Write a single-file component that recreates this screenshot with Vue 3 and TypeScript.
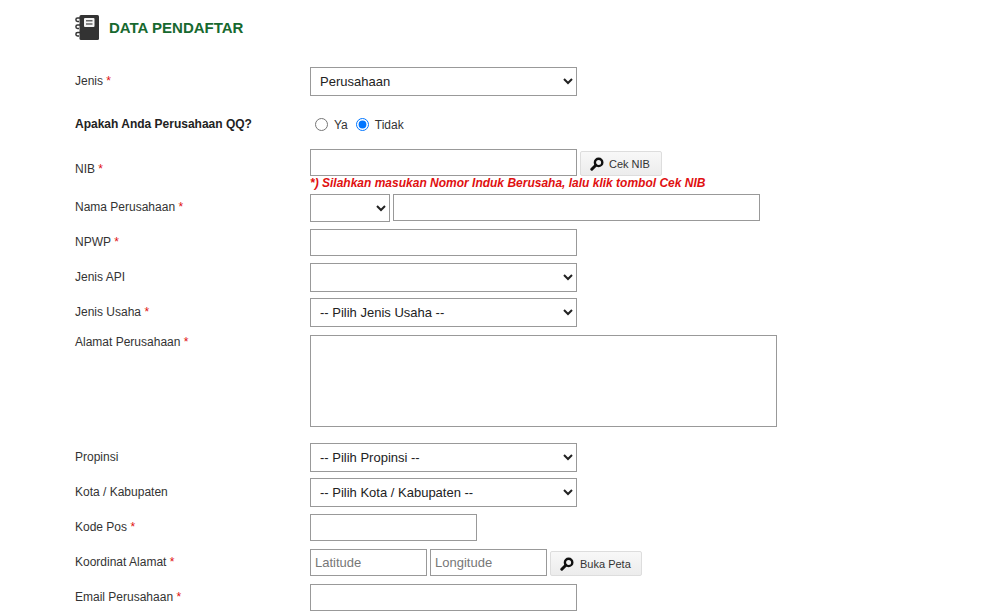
<script setup lang="ts">
import { ref } from "vue";

const jenis = ref<string>("Perusahaan");
const qq = ref<string>("Tidak");
</script>

<template>
  <div class="page">
    <div class="title">
      <svg class="book" width="25" height="25" viewBox="0 0 25 25">
        <rect x="4.5" y="0" width="19.5" height="25" rx="1.5" fill="#333" />
        <path d="M6.5 3H2.6a1.7 1.7 0 0 0 0 3.4H4M6.5 10H2.6a1.7 1.7 0 0 0 0 3.4H4M6.5 17.5H2.6a1.7 1.7 0 0 0 0 3.4H4" stroke="#333" stroke-width="1.5" fill="none" />
        <rect x="9" y="3" width="10.5" height="9" rx="1" fill="#f4f4f4" />
        <rect x="11" y="5.2" width="6.5" height="1.2" fill="#444" />
        <rect x="11" y="8.4" width="6.5" height="1.2" fill="#444" />
      </svg>
      <span>DATA PENDAFTAR</span>
    </div>

    <div class="row r-select">
      <label>Jenis <em>*</em></label>
      <select v-model="jenis" class="w267">
        <option>Perusahaan</option>
        <option>Perorangan</option>
      </select>
    </div>

    <div class="row r-radio">
      <label class="strong">Apakah Anda Perusahaan QQ?</label>
      <div class="radios">
        <input id="ya" v-model="qq" type="radio" value="Ya" />
        <span>Ya</span>
        <input id="tidak" v-model="qq" type="radio" value="Tidak" />
        <span>Tidak</span>
      </div>
    </div>

    <div class="row r-nib">
      <label>NIB <em>*</em></label>
      <div>
        <div class="inline">
          <input type="text" class="w267" />
          <button type="button" class="btn btn-nib">
            <svg width="14" height="14" viewBox="0 0 14 14">
              <circle cx="8.6" cy="5.4" r="3.7" fill="none" stroke="#111" stroke-width="2.4" />
              <path d="M5.8 8.2L1.8 12.2" stroke="#111" stroke-width="3" stroke-linecap="round" />
            </svg>
            Cek NIB
          </button>
        </div>
        <p class="hint">*) Silahkan masukan Nomor Induk Berusaha, lalu klik tombol Cek NIB</p>
      </div>
    </div>

    <div class="row r-nama">
      <label>Nama Perusahaan <em>*</em></label>
      <div class="inline top">
        <select class="w80"><option></option></select>
        <input type="text" class="w367" />
      </div>
    </div>

    <div class="row r-input r-npwp">
      <label>NPWP <em>*</em></label>
      <input type="text" class="w267" />
    </div>

    <div class="row r-select">
      <label>Jenis API</label>
      <select class="w267"><option></option></select>
    </div>

    <div class="row r-select r-usaha">
      <label>Jenis Usaha <em>*</em></label>
      <select class="w267"><option>-- Pilih Jenis Usaha --</option></select>
    </div>

    <div class="row r-area">
      <label>Alamat Perusahaan <em>*</em></label>
      <textarea></textarea>
    </div>

    <div class="row r-select">
      <label>Propinsi</label>
      <select class="w267"><option>-- Pilih Propinsi --</option></select>
    </div>

    <div class="row r-select r-kota">
      <label>Kota / Kabupaten</label>
      <select class="w267"><option>-- Pilih Kota / Kabupaten --</option></select>
    </div>

    <div class="row r-input">
      <label>Kode Pos <em>*</em></label>
      <input type="text" class="w167" />
    </div>

    <div class="row r-input">
      <label>Koordinat Alamat <em>*</em></label>
      <div class="inline">
        <input type="text" class="w117" placeholder="Latitude" />
        <input type="text" class="w117" placeholder="Longitude" />
        <button type="button" class="btn btn-peta">
          <svg width="14" height="14" viewBox="0 0 14 14">
            <circle cx="8.6" cy="5.4" r="3.7" fill="none" stroke="#111" stroke-width="2.4" />
            <path d="M5.8 8.2L1.8 12.2" stroke="#111" stroke-width="3" stroke-linecap="round" />
          </svg>
          Buka Peta
        </button>
      </div>
    </div>

    <div class="row r-input">
      <label>Email Perusahaan <em>*</em></label>
      <input type="text" class="w267" />
    </div>
  </div>
</template>

<style>
html, body {
  background: #fff;
  overflow: hidden;
}
</style>

<style scoped>
.page {
  padding: 15px 0 0 75px;
  font-family: "Liberation Sans", Arial, sans-serif;
  font-size: 12px;
  color: #333;
}
.title {
  display: flex;
  align-items: center;
  gap: 9px;
  height: 25px;
  margin-bottom: 27px;
  color: #17692f;
  font-size: 15px;
  font-weight: bold;
}
.row {
  display: grid;
  grid-template-columns: 235px auto;
  justify-content: start;
}
.row label {
  line-height: 14px;
  padding-top: 7px;
}
.row label em {
  color: #e01010;
  font-style: normal;
}
.row .strong {
  font-weight: bold;
  color: #222;
  padding-top: 0;
}
.r-select { margin-bottom: 6px; }
.r-usaha { margin-bottom: 8px; }
.r-kota { margin-bottom: 7px; }
.r-input { margin-bottom: 8px; }
.r-input label { padding-top: 6px; }
.r-npwp { margin-bottom: 7px; }
.r-radio { margin: 20px 0 19px; height: 14px; align-items: center; }
.r-nib { margin-bottom: 4px; }
.r-nib label { padding-top: 13px; }
.r-nama { margin-bottom: 7px; }
.r-nama label { padding-top: 6px; }
.r-nama select { height: 28px; }
.r-area { margin-bottom: 16px; }
.r-area label { padding-top: 0; }
select, input[type="text"], textarea {
  box-sizing: border-box;
  border: 1px solid #999;
  background: #fff;
  border-radius: 0;
  font-family: "Liberation Sans", Arial, sans-serif;
  font-size: 13px;
  color: #222;
  display: block;
  margin: 0;
  outline: 0;
}
select {
  height: 29px;
  padding: 0 5px;
}
input[type="text"] {
  height: 27px;
  padding: 0 4px;
}
input::placeholder { color: #777; }
textarea {
  width: 467px;
  height: 92px;
  resize: none;
}
.w267 { width: 267px; }
.w167 { width: 167px; }
.w117 { width: 117px; }
.w80 { width: 80px; }
.w367 { width: 367px; }
.inline {
  display: flex;
  align-items: flex-end;
  gap: 3px;
}
.inline.top { align-items: flex-start; }
.radios {
  display: flex;
  align-items: center;
  padding-left: 5px;
}
.radios input {
  margin: 0 6px 0 0;
  width: 13px;
  height: 13px;
}
.radios span { margin-right: 8px; padding-top: 2px; }
.btn {
  display: flex;
  align-items: center;
  height: 25px;
  box-sizing: border-box;
  border: 1px solid #ddd;
  border-radius: 2px;
  background: linear-gradient(#f8f8f8, #ececec);
  font-family: "Liberation Sans", Arial, sans-serif;
  font-size: 11px;
  color: #333;
  padding: 0 0 0 9px;
  gap: 6px;
}
.btn-nib { width: 82px; gap: 5px; }
.btn-peta { width: 92px; }
.hint {
  margin: 0;
  height: 14px;
  line-height: 14px;
  font-size: 12px;
  font-weight: bold;
  font-style: italic;
  color: #e01010;
}
</style>
